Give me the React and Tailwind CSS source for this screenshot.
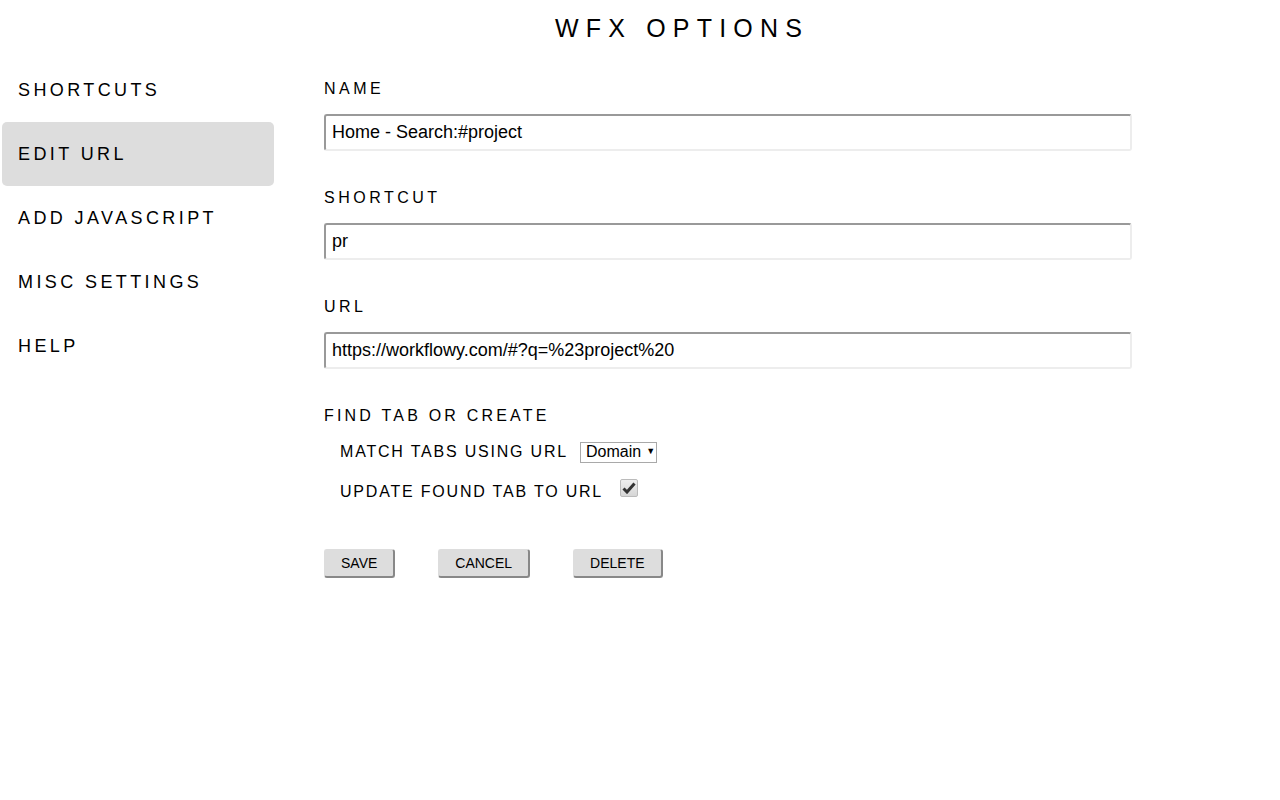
import { useState } from "react";

const font = { fontFamily: '"Liberation Sans", Arial, sans-serif' };

const menu = ["SHORTCUTS", "EDIT URL", "ADD JAVASCRIPT", "MISC SETTINGS", "HELP"];

function Field({ label, value, first }) {
  return (
    <div className={first ? "" : "mt-[37px]"}>
      <div className="text-[16px] leading-[20px] tracking-[3.5px] text-black">{label}</div>
      <input
        readOnly
        value={value}
        className="mt-[15px] block w-[808px] h-[37px] px-[6px] text-[18px] text-black bg-white rounded-[3px] border-2 border-t-[#999] border-l-[#999] border-r-[#ededed] border-b-[#ededed] outline-none"
        style={font}
      />
    </div>
  );
}

function Button({ children }) {
  return (
    <button
      className="h-[29px] px-4 text-[14px] text-black bg-[#dddddd] rounded-[3px] border border-[#dddddd] border-r-2 border-b-2 border-r-[#888] border-b-[#888]"
      style={font}
    >
      {children}
    </button>
  );
}

export default function App() {
  const [active] = useState("EDIT URL");

  return (
    <div className="min-h-[800px] w-[1280px] bg-white text-black" style={font}>
      {/* TITLE */}
      <div className="h-[58px] flex justify-center items-start pt-[13px] pl-[84px]">
        <h1 className="text-[25px] leading-[30px] tracking-[7.2px]">WFX OPTIONS</h1>
      </div>

      <div className="flex">
        {/* SIDEBAR */}
        <nav className="w-[272px] ml-[2px] flex flex-col">
          {menu.map((item) => (
            <div
              key={item}
              className={
                "h-[64px] flex items-center pl-4 text-[18px] tracking-[3.4px] rounded-[5px] " +
                (item === active ? "bg-[#dddddd]" : "")
              }
            >
              {item}
            </div>
          ))}
        </nav>

        {/* CONTENT */}
        <div className="ml-[50px] pt-[21px]">
          <Field first label="NAME" value="Home - Search:#project" />
          <Field label="SHORTCUT" value="pr" />
          <Field label="URL" value="https://workflowy.com/#?q=%23project%20" />

          <div className="mt-[37px] text-[16px] leading-[20px] tracking-[3.2px]">FIND TAB OR CREATE</div>

          <div className="ml-[16px] mt-[16px] flex items-center h-[20px]">
            <span className="text-[16px] tracking-[1.8px]">MATCH TABS USING URL</span>
            <div className="ml-[12px] h-[21px] w-[77px] border border-[#a9a9a9] flex items-center pl-[5px] text-[16px]">
              Domain
              <span className="ml-[5px] text-[9px]">▼</span>
            </div>
          </div>

          <div className="ml-[16px] mt-[20px] flex items-center h-[20px]">
            <span className="text-[16px] tracking-[1.8px]">UPDATE FOUND TAB TO URL</span>
            <div className="ml-[17px] -mt-[8px] w-[18px] h-[18px] rounded-[2px] border border-[#bbb] bg-gradient-to-b from-[#eee] to-[#d6d6d6] flex items-center justify-center">
              <svg width="14" height="12" viewBox="0 0 14 12">
                <path d="M1.5 6.5 L5 10 L12.5 1.5" fill="none" stroke="#333" strokeWidth="3" />
              </svg>
            </div>
          </div>

          <div className="mt-[47px] flex gap-[43px]">
            <Button>SAVE</Button>
            <Button>CANCEL</Button>
            <Button>DELETE</Button>
          </div>
        </div>
      </div>
    </div>
  );
}
